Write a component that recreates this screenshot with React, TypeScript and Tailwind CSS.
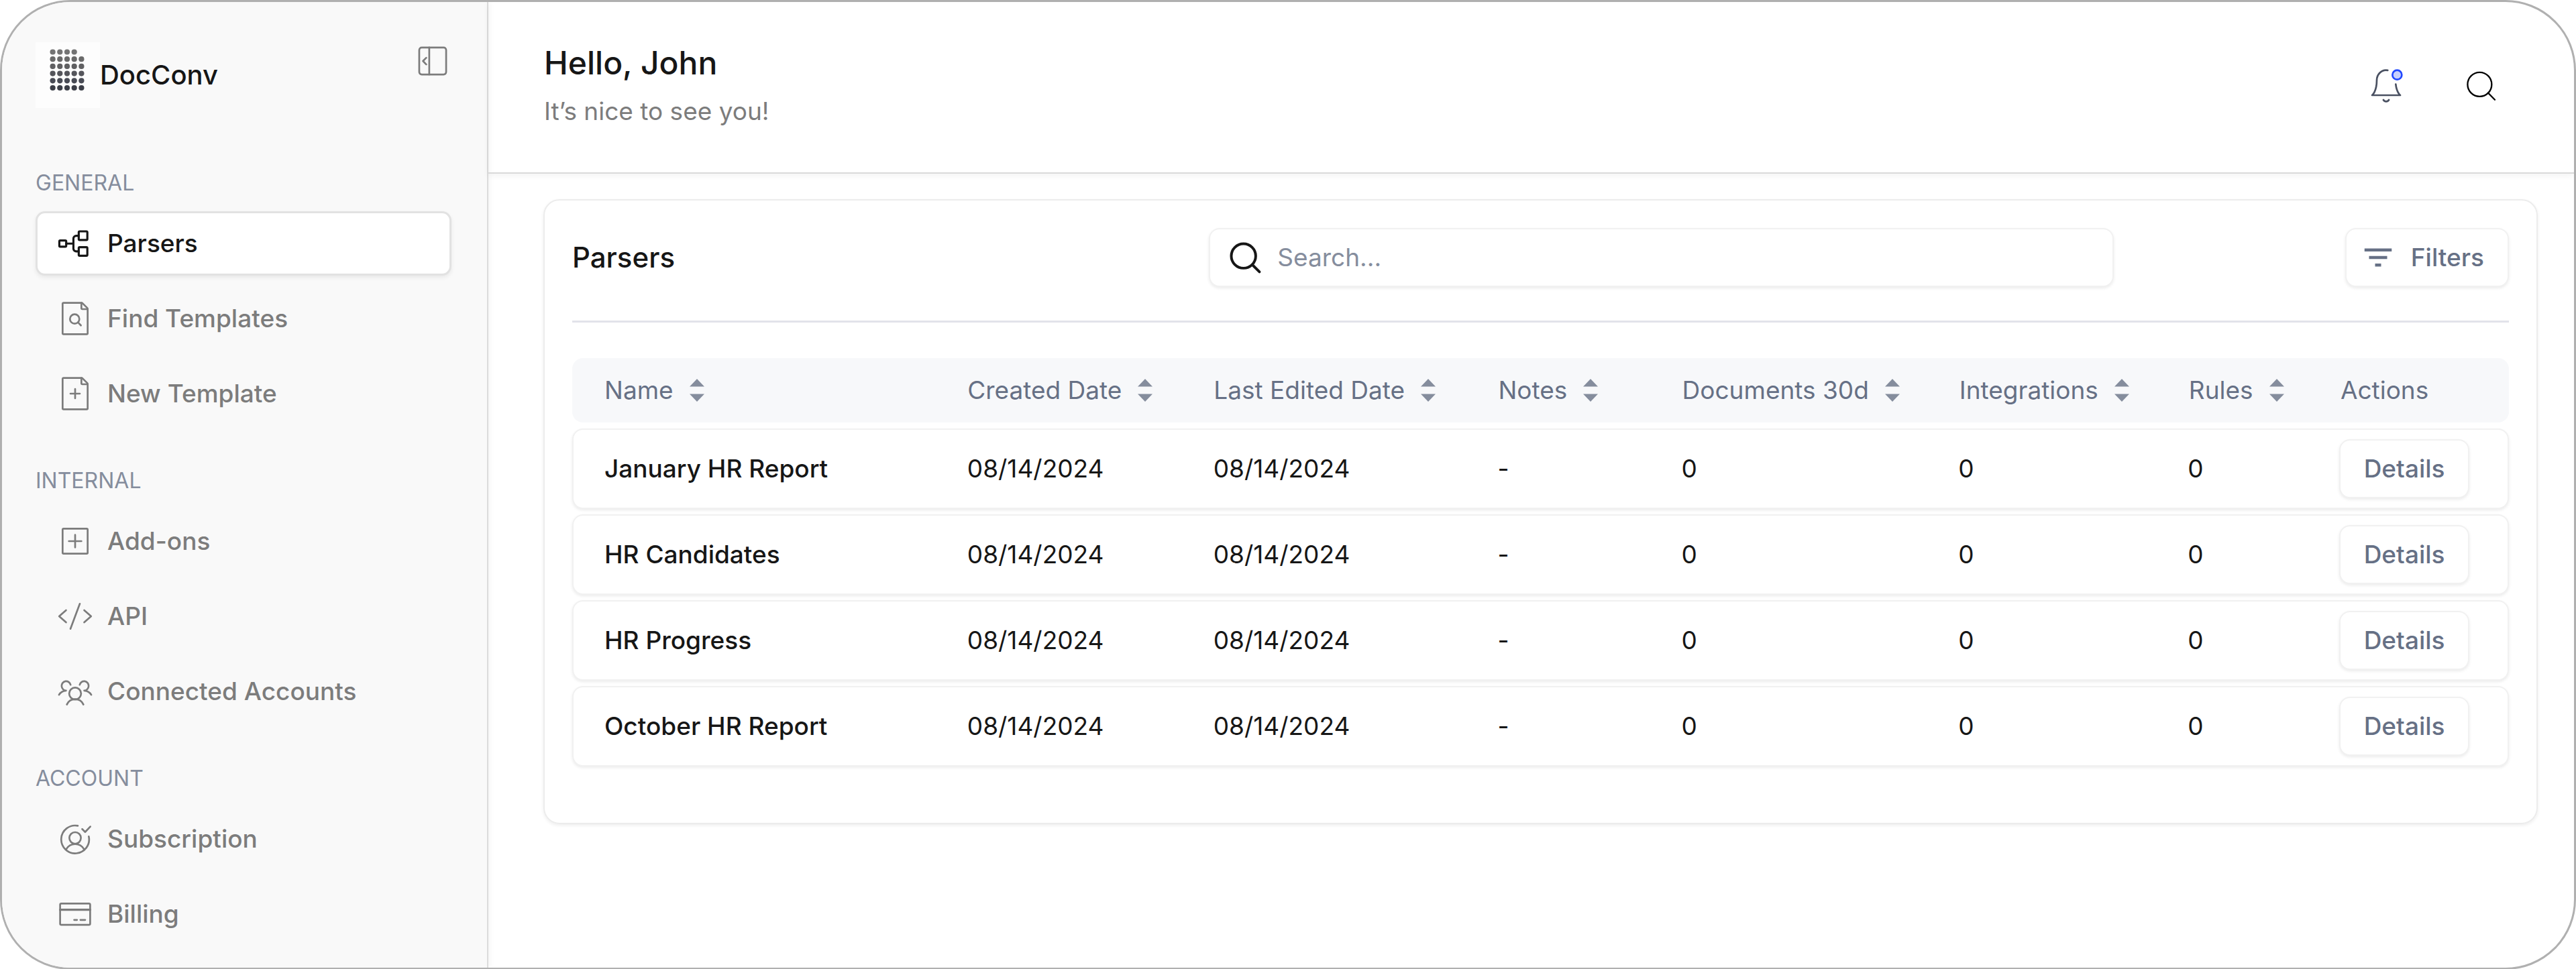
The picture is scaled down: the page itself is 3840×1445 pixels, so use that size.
import type { ReactNode } from 'react';
import { MdFilterList } from 'react-icons/md';

function Icon({ children, stroke = 1.15 }: { children: ReactNode; stroke?: number }) {
  return (
    <svg
      className="size-14 shrink-0"
      viewBox="0 0 24 24"
      fill="none"
      stroke="currentColor"
      strokeWidth={stroke}
      strokeLinecap="round"
      strokeLinejoin="round"
      aria-hidden="true"
    >
      {children}
    </svg>
  );
}

const page = (
  <>
    <path d="M4 21.4V2.6a.6.6 0 0 1 .6-.6h11.65a.6.6 0 0 1 .43.18l3.14 3.14a.6.6 0 0 1 .18.43V21.4a.6.6 0 0 1-.6.6H4.6a.6.6 0 0 1-.6-.6Z" />
    <path d="M16 2v3.4a.6.6 0 0 0 .6.6H20" />
  </>
);

const ParsersIcon = (
  <Icon stroke={1.35}>
    <rect x="1.9" y="10.1" width="4.4" height="4" rx="0.6" />
    <rect x="14.3" y="4.3" width="5.5" height="5.5" rx="0.6" />
    <rect x="14.3" y="14.4" width="5.5" height="5.5" rx="0.6" />
    <path d="M6.3 12.1h4.6M14.3 7.1h-1.6a1.8 1.8 0 0 0-1.8 1.8v6.4a1.8 1.8 0 0 0 1.8 1.8h1.6" />
  </Icon>
);

const FindIcon = (
  <Icon>
    {page}
    <circle cx="11.7" cy="12.3" r="3" />
    <path d="m13.9 14.5 1.8 1.9" />
  </Icon>
);

const NewIcon = (
  <Icon>
    {page}
    <path d="M9 12h6M12 9v6" />
  </Icon>
);

const AddonsIcon = (
  <Icon>
    <rect x="4" y="4" width="16" height="16" rx="0.6" />
    <path d="M8 12h8M12 8v8" />
  </Icon>
);

const ApiIcon = (
  <Icon>
    <path d="M15 4 9 20M6.2 8.1 1.8 12l4.4 3.9M17.8 8.1l4.4 3.9-4.4 3.9" />
  </Icon>
);

const AccountsIcon = (
  <Icon>
    <circle cx="12" cy="13.4" r="3.8" />
    <path d="M6.7 20.4a5.8 5.8 0 0 1 10.6 0" />
    <path d="M9.1 7.8A2.9 3 0 1 0 6.2 11.5C4.1 11.7 2.5 12.7 1.7 14.2" />
    <path d="M14.9 7.8A2.9 3 0 1 1 17.8 11.5C19.9 11.7 21.5 12.7 22.3 14.2" />
  </Icon>
);

const SubscriptionIcon = (
  <Icon>
    <path d="M13.7 3.6A8.9 8.9 0 1 0 20.7 10.4" />
    <circle cx="12" cy="11.4" r="3.7" />
    <path d="M6.3 18.6a6.6 6.6 0 0 1 11.4 0M16.5 5.7l1.9 1.9 3.3-3.5" />
  </Icon>
);

const BillingIcon = (
  <Icon>
    <rect x="2.4" y="5.3" width="19.2" height="13.6" rx="0.8" />
    <path d="M2.4 9.3h19.2" strokeWidth="1.4" />
    <path d="M11.4 15.8h1.8M15.4 15.8h3" strokeWidth="1.2" />
  </Icon>
);

const NAV = [
  {
    label: 'GENERAL',
    items: [
      { name: 'Parsers', icon: ParsersIcon, active: true },
      { name: 'Find Templates', icon: FindIcon },
      { name: 'New Template', icon: NewIcon },
    ],
  },
  {
    label: 'INTERNAL',
    items: [
      { name: 'Add-ons', icon: AddonsIcon },
      { name: 'API', icon: ApiIcon },
      { name: 'Connected Accounts', icon: AccountsIcon },
    ],
  },
  {
    label: 'ACCOUNT',
    items: [
      { name: 'Subscription', icon: SubscriptionIcon },
      { name: 'Billing', icon: BillingIcon },
    ],
  },
];

const COLUMNS = ['Name', 'Created Date', 'Last Edited Date', 'Notes', 'Documents 30d', 'Integrations', 'Rules'];

const PARSERS = [
  { name: 'January HR Report', created: '08/14/2024', edited: '08/14/2024', notes: '-', docs: 0, integrations: 0, rules: 0 },
  { name: 'HR Candidates', created: '08/14/2024', edited: '08/14/2024', notes: '-', docs: 0, integrations: 0, rules: 0 },
  { name: 'HR Progress', created: '08/14/2024', edited: '08/14/2024', notes: '-', docs: 0, integrations: 0, rules: 0 },
  { name: 'October HR Report', created: '08/14/2024', edited: '08/14/2024', notes: '-', docs: 0, integrations: 0, rules: 0 },
];

const rowGrid = 'grid grid-cols-[541fr_367fr_424fr_274fr_413fr_342fr_226fr_251fr] items-center';
const outlined = 'rounded-2xl border-2 border-[#f1f1f1] bg-white shadow-[0_2px_4px_rgba(0,0,0,0.08)]';

const DOT_ROWS = ['#747474', '#6a6a6a', '#606062', '#54555b', '#484b55', '#3b3e47'];

function Logo() {
  return (
    <svg className="h-[98px] w-24 bg-[#fdfdfd]" viewBox="0 0 96 98" aria-hidden="true">
      {DOT_ROWS.map((fill, row) =>
        [0, 1, 2, 3, 4]
          .filter((col) => row > 0 || col < 4)
          .map((col) => (
            <circle key={`${row}-${col}`} cx={25.6 + col * 10.7} cy={14.5 + row * 10.7} r="4.1" fill={fill} />
          ))
      )}
    </svg>
  );
}

function SortIcon() {
  return (
    <svg className="h-[34px] w-[22px]" viewBox="0 0 22 34" fill="#858d9d" aria-hidden="true">
      <path d="M11 0 22 11.5H0ZM11 34 0 22.5h22Z" />
    </svg>
  );
}

function Sidebar() {
  return (
    <aside className="w-[725px] shrink-0 border-r-2 border-[#dcdcdc] bg-[#f9f9f9] pt-[60px] shadow-[2px_0_8px_rgba(0,0,0,0.05)]">
      <div className="flex items-start justify-between pr-[53px] pl-[50px]">
        <a href="#" className="flex items-center text-[40px] leading-[48px] font-medium text-[#161616]">
          <Logo />
          DocConv
        </a>
        <button type="button" aria-label="Collapse sidebar" className="text-[#7c7c7c]">
          <Icon>
            <rect x="3.4" y="3.4" width="17.2" height="17.2" rx="1.6" />
            <path d="M9.8 3.4v17.2M7.9 9.9 5.8 12l2.1 2.2" />
          </Icon>
        </button>
      </div>
      <nav className="mt-[92px] flex flex-col gap-[62px] pr-[53px] pb-8 pl-[50px]">
        {NAV.map((group) => (
          <div key={group.label}>
            <h2 className="mb-[22px] text-[32px] leading-10 text-[#858d9d]">{group.label}</h2>
            <ul className="flex flex-col gap-4">
              {group.items.map((item) => (
                <li key={item.name}>
                  <a
                    href="#"
                    className={`flex h-24 items-center gap-5 rounded-[14px] border-[3px] pl-7 text-[37px] leading-[48px] font-medium ${
                      item.active
                        ? 'border-[#e2e2e2] bg-white text-[#161616] shadow-[0_3px_6px_rgba(0,0,0,0.07)]'
                        : 'border-transparent text-[#7c7c7c]'
                    }`}
                  >
                    {item.icon}
                    {item.name}
                  </a>
                </li>
              ))}
            </ul>
          </div>
        ))}
      </nav>
    </aside>
  );
}

function Header() {
  return (
    <header className="flex h-64 items-center justify-between border-b-2 border-[#d9d9d9] pr-[111px] pb-1 pl-[83px] shadow-[0_3px_10px_rgba(0,0,0,0.05)]">
      <div className="flex flex-col gap-5">
        <h1 className="text-[48px] leading-[56px] font-medium text-[#161616]">Hello, John</h1>
        <p className="text-[37px] leading-[48px] text-[#7c7c7c]">It’s nice to see you!</p>
      </div>
      <div className="flex items-center gap-[85px]">
        <button type="button" aria-label="Notifications" className="text-[#4a5162]">
          <Icon>
            <path d="M18.13 11C18.72 16.38 21 18 21 18H3s3-2.13 3-9.6c0-1.7.63-3.33 1.76-4.53A5.8 5.8 0 0 1 13 2.09" />
            <circle cx="19" cy="5" r="3" fill="#c6cffc" stroke="#2148ff" />
            <path d="M13.73 21a2 2 0 0 1-3.46 0" />
          </Icon>
        </button>
        <button type="button" aria-label="Search" className="text-black">
          <Icon stroke={1}>
            <circle cx="11.3" cy="11.1" r="7.7" />
            <path d="m16.7 16.5 4.3 4.4" />
          </Icon>
        </button>
      </div>
    </header>
  );
}

function ParserTable() {
  return (
    <table className="mt-[53px] block text-[37px] leading-[48px]">
      <thead className="block">
        <tr className={`${rowGrid} h-24 rounded-2xl bg-[#f7f8fa] pl-12 text-[#667085]`}>
          {COLUMNS.map((col) => (
            <th key={col} className="text-left font-normal">
              <button type="button" className="flex items-center gap-6 whitespace-nowrap">
                {col}
                <SortIcon />
              </button>
            </th>
          ))}
          <th className="text-left font-normal">Actions</th>
        </tr>
      </thead>
      <tbody className="mt-[9px] flex flex-col gap-2 text-[#161616]">
        {PARSERS.map((p) => (
          <tr key={p.name} className={`${rowGrid} ${outlined} h-[120px] pl-[46px]`}>
            <td className="font-medium">{p.name}</td>
            <td>{p.created}</td>
            <td>{p.edited}</td>
            <td>{p.notes}</td>
            <td>{p.docs}</td>
            <td>{p.integrations}</td>
            <td>{p.rules}</td>
            <td>
              <button type="button" className={`${outlined} flex h-[88px] w-[194px] items-center justify-center font-medium text-[#667085]`}>
                Details
              </button>
            </td>
          </tr>
        ))}
      </tbody>
    </table>
  );
}

export default function App() {
  return (
    <div className="flex min-h-screen overflow-hidden rounded-[105px] border-[3px] border-[#b0b0b0] bg-white font-['Inter',sans-serif]">
      <Sidebar />
      <main className="min-w-0 flex-1">
        <Header />
        <section className="mt-[38px] mr-[54px] mb-12 ml-[82px] rounded-3xl border-2 border-[#ececec] px-[41px] pt-[41px] pb-[84px] shadow-[0_2px_5px_rgba(0,0,0,0.07)]">
          <div className="grid grid-cols-[949fr_1348fr_589fr] items-center border-b-3 border-[#e2e3ea] pb-[50px]">
            <h2 className="text-[42px] leading-[48px] font-medium text-[#161616]">Parsers</h2>
            <label className={`${outlined} flex h-[88px] items-center gap-5 pl-6 text-[#161616]`}>
              <Icon stroke={1.7}>
                <circle cx="11" cy="11" r="7.8" />
                <path d="m16.6 16.6 4.6 4.6" />
              </Icon>
              <input
                type="search"
                aria-label="Search parsers"
                placeholder="Search..."
                className="min-w-0 flex-1 bg-transparent text-[37px] leading-[48px] outline-none placeholder:text-[#858d9d]"
              />
            </label>
            <button
              type="button"
              className={`${outlined} flex h-[88px] items-center gap-[22px] justify-self-end pr-[35px] pl-5 text-[37px] leading-[48px] font-medium text-[#667085]`}
            >
              <MdFilterList className="size-[54px]" />
              Filters
            </button>
          </div>
          <ParserTable />
        </section>
      </main>
    </div>
  );
}
